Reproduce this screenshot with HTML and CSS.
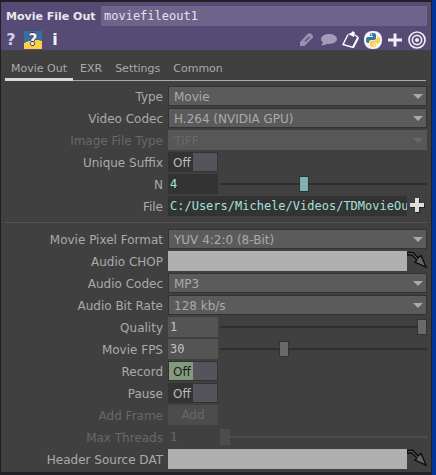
FILE: index.html
```html
<!DOCTYPE html>
<html lang="en">
<head>
<meta charset="utf-8">
<title>Movie File Out</title>
<link rel="stylesheet" href="styles.css">
</head>
<body>
<main class="panel">
  <header class="header">
    <div class="title-row">
      <label class="op-type" for="opname">Movie File Out</label>
      <input class="op-name" id="opname" value="moviefileout1" spellcheck="false">
    </div>
    <div class="toolbar">
      <button class="tool help">?</button>
      <button class="tool pyhelp">?</button>
      <button class="tool info">i</button>
      <span class="spacer"></span>
      <button class="tool icon" aria-label="Edit"><svg width="20" height="18" viewBox="0 0 20 18"><path d="M3 15V11L11 2.500H14L16 5V6.500L7.500 15Z" fill="#9790ae"/><path d="M8 10.500L12.500 6" stroke="#554b75" stroke-width="1.200"/></svg></button>
      <button class="tool icon" aria-label="Comment"><svg width="20" height="18" viewBox="0 0 20 18"><ellipse cx="10" cy="8" rx="8" ry="5" fill="#a39bb9"/><path d="M4 10Q4 13 2 14Q6 15 9 12Z" fill="#a39bb9"/></svg></button>
      <button class="tool icon" aria-label="Clipboard"><svg width="20" height="18" viewBox="0 0 20 18"><path d="M7 3.500L2 13.500L12 16.500L17 6.500L14 4" fill="none" stroke="#fff" stroke-width="1.400"/><path d="M12 16.500L17 7" stroke="#fff" stroke-width="2"/><path d="M7 3L10 2L12 0L14 2L13 6Z" fill="#fff"/></svg></button>
      <button class="tool icon" aria-label="Python"><svg width="20" height="18" viewBox="0 0 20 18"><rect x="1" y="0" width="18" height="18" rx="8" fill="#f2f2f5"/><path d="M7 5V3.500Q7 2 10 2Q13 2 13 4V7Q13 9 11 9H8Q6 9 6 12H5Q3 12 3 9Q3 6 5 6H10V5Z" fill="#3477a5"/><path d="M13 13V14.500Q13 16 10 16Q7 16 7 14V11Q7 9.500 9 9.500H12Q14 9 14 6H15Q17 6 17 9Q17 12.500 15 12.500H10V13Z" fill="#ffd04a"/><circle cx="8.500" cy="3.700" r=".7" fill="#fff"/><circle cx="11.500" cy="14.400" r=".7" fill="#fff"/></svg></button>
      <button class="tool icon" aria-label="Add"><svg width="20" height="18" viewBox="0 0 20 18"><path d="M10 2.500V15.500M3 9H17" stroke="#f0eff4" stroke-width="3"/></svg></button>
      <button class="tool icon" aria-label="Target"><svg width="20" height="18" viewBox="0 0 20 18"><g fill="none" stroke="#efedf4" stroke-width="1.700"><circle cx="10" cy="9" r="8"/><circle cx="10" cy="9" r="4.600"/></g><circle cx="10" cy="9" r="2" fill="#efedf4"/></svg></button>
    </div>
  </header>

  <nav class="tabs">
    <a class="tab active" href="#">Movie Out</a>
    <a class="tab" href="#">EXR</a>
    <a class="tab" href="#">Settings</a>
    <a class="tab" href="#">Common</a>
  </nav>

  <form class="params">
    <div class="row"><label for="type">Type</label><div class="menu"><select id="type"><option>Movie</option></select></div></div>
    <div class="row"><label for="vcodec">Video Codec</label><div class="menu"><select id="vcodec"><option>H.264 (NVIDIA GPU)</option></select></div></div>
    <div class="row off"><label for="imgtype">Image File Type</label><div class="menu"><select id="imgtype" disabled><option>TIFF</option></select></div></div>
    <div class="row"><label for="unique">Unique Suffix</label><label class="toggle"><span>Off</span><input type="checkbox" id="unique"></label></div>
    <div class="row changed"><label for="n">N</label><div class="number"><input class="value" id="n" value="4"><input type="range" aria-label="N slider" min="0" max="10" value="4"></div></div>
    <div class="row changed"><label for="file">File</label><div class="path"><input class="value" id="file" value="C:/Users/Michele/Videos/TDMovieOu" spellcheck="false"><button type="button" class="end" aria-label="Browse"><svg width="20" height="20" viewBox="0 0 20 20"><path d="M11 3V17M4 10H18" stroke="#222" stroke-width="4"/><path d="M10 2V16M3 9H17" stroke="#ddd" stroke-width="4"/></svg></button></div></div>
    <hr>
    <div class="row"><label for="pixfmt">Movie Pixel Format</label><div class="menu"><select id="pixfmt"><option>YUV 4:2:0 (8-Bit)</option></select></div></div>
    <div class="row"><label for="chop">Audio CHOP</label><div class="path"><input class="reference" id="chop"><button type="button" class="end" aria-label="Pick CHOP"><svg width="20" height="20" viewBox="0 0 20 20"><path d="M0 1.500H6L11 7L14 4.500L19 16L8 11L10 9L5 4H0Z" fill="#666" stroke="#0b0b0b" stroke-width="1.300"/></svg></button></div></div>
    <div class="row"><label for="acodec">Audio Codec</label><div class="menu"><select id="acodec"><option>MP3</option></select></div></div>
    <div class="row"><label for="bitrate">Audio Bit Rate</label><div class="menu"><select id="bitrate"><option>128 kb/s</option></select></div></div>
    <div class="row"><label for="quality">Quality</label><div class="number"><input class="value" id="quality" value="1"><input type="range" aria-label="Quality slider" min="0" max="1" value="1"></div></div>
    <div class="row"><label for="fps">Movie FPS</label><div class="number"><input class="value" id="fps" value="30"><input type="range" aria-label="Movie FPS slider" min="0" max="100" value="30"></div></div>
    <div class="row"><label for="record">Record</label><label class="toggle green"><span>Off</span><input type="checkbox" id="record"></label></div>
    <div class="row"><label for="pause">Pause</label><label class="toggle"><span>Off</span><input type="checkbox" id="pause"></label></div>
    <div class="row off"><label for="add">Add Frame</label><button type="button" class="pulse" id="add" disabled>Add</button></div>
    <div class="row off"><label for="threads">Max Threads</label><div class="number"><input class="value" id="threads" value="1" disabled><input type="range" aria-label="Max Threads slider" min="1" max="32" value="1" disabled></div></div>
    <div class="row"><label for="dat">Header Source DAT</label><div class="path"><input class="reference" id="dat"><button type="button" class="end" aria-label="Pick DAT"><svg width="20" height="20" viewBox="0 0 20 20"><path d="M0 1.500H6L11 7L14 4.500L19 16L8 11L10 9L5 4H0Z" fill="#666" stroke="#0b0b0b" stroke-width="1.300"/></svg></button></div></div>
  </form>
</main>
</body>
</html>
```
FILE: styles.css
```css
* { box-sizing: border-box; }

body {
  margin: 0;
  padding: 2px 5px 3px 1px;
  min-height: 100vh;
  background: linear-gradient(to left, #02359c 4px, #202027 4px);
  font: 12px/20px "DejaVu Sans", Verdana, sans-serif;
  color: #aaa;
}

input, select, button {
  margin: 0;
  padding: 0;
  border: 0;
  border-radius: 0;
  background: none;
  font: inherit;
  color: inherit;
  appearance: none;
}

svg { display: block; }

.panel { background: #404040; }

.header {
  height: 48px;
  padding: 4px 4px 0 5px;
  background: #554b75;
}

.title-row { display: flex; }

.op-type {
  width: 95px;
  font-weight: bold;
  font-size: 11px;
  line-height: 22px;
  color: #e9e7ee;
  white-space: nowrap;
}

.op-name {
  flex: 1;
  min-width: 0;
  height: 20px;
  padding-left: 3px;
  background: #6e638b;
  font-family: "DejaVu Sans Mono", monospace;
  color: #e4e1eb;
}

.toolbar {
  display: flex;
  align-items: center;
  height: 24px;
}

.spacer { flex: 1; }

.tool {
  width: 18px;
  height: 18px;
  font-size: 16px;
  line-height: 18px;
  font-weight: bold;
  color: #f2f1f6;
}

.help { width: 10px; margin-right: 8px; color: #d2cede; }

.pyhelp {
  background: radial-gradient(ellipse 16px 9px at 12px 18px, #ffd140 95%, #3471a3 100%);
  text-shadow: 1px 0 #403758, -1px 0 #403758, 0 1px #403758, 0 -1px #403758;
}

.info { width: 10px; margin-left: 8px; }

.icon { width: 20px; margin-left: 2px; }

.tabs {
  display: flex;
  gap: 1px;
  height: 31px;
  margin: 0 5px 5px 4px;
  padding-top: 8px;
  background: linear-gradient(#aaa, #aaa) 0 100% / 100% 1px no-repeat;
  font-size: 11px;
}

.tab {
  padding: 0 6px;
  line-height: 22px;
  color: #aaa;
  text-decoration: none;
}

.tab.active { border-bottom: 3px solid #d8dbd8; }

.params {
  display: flex;
  flex-direction: column;
  gap: 2px;
  padding: 0 4px 3px;
}

.row {
  display: grid;
  grid-template-columns: 163px 1fr;
  height: 20px;
}

.row > label:first-child {
  padding-right: 5px;
  line-height: 22px;
  text-align: right;
}

.off { color: #686868; }

hr {
  width: 100%;
  height: 1px;
  margin: 4px 0;
  border: 0;
  background: #555;
}

.menu {
  position: relative;
  height: 20px;
  border: 1px solid #333;
  background: #5b5b5b;
}

.menu select {
  width: 100%;
  height: 18px;
  padding-left: 5px;
  line-height: 20px;
  opacity: 1;
}

.menu::after {
  content: "";
  position: absolute;
  top: 7px;
  right: 3px;
  border: 5px solid transparent;
  border-top-color: #aaa;
  border-bottom: 0;
  pointer-events: none;
}

.off .menu { border-color: #575757; background: #575757; color: #6a6a6a; }
.off .menu::after { border-top-color: #6a6a6a; }

.toggle {
  display: flex;
  width: 50px;
  height: 20px;
  border: 1px solid #333;
  background: #333;
}

.toggle span {
  width: 24px;
  padding-left: 4px;
  color: #bbb;
}

.toggle input { width: 24px; height: 18px; background: #55545d; }

.toggle.green span { background: #849a7d; color: #1c1c1c; }

.number {
  display: grid;
  grid-template-columns: 50px 1fr;
  gap: 2px;
}

.value {
  width: 100%;
  height: 20px;
  padding-left: 2px;
  background: #545454;
  font-family: "DejaVu Sans Mono", monospace;
  color: #c2c2c2;
}

.changed .value { background: #333; color: #a5e0dc; }
.off .value { background: none; color: #686868; }

input[type="range"] {
  width: 100%;
  height: 20px;
  background: linear-gradient(#2e2e2e, #2e2e2e) 0 50% / 100% 2px no-repeat;
}

input[type="range"]::-webkit-slider-thumb {
  appearance: none;
  width: 10px;
  height: 16px;
  border: 1px solid #333;
  background: #6a6a6a;
}

.changed input[type="range"]::-webkit-slider-thumb { background: #7fb0b0; }

.off input[type="range"] { background-image: linear-gradient(#4d4d4d, #4d4d4d); }

.off input[type="range"]::-webkit-slider-thumb {
  border-color: #4d4d4d;
  background: #4d4d4d;
}

.path {
  display: grid;
  grid-template-columns: 1fr 20px;
}

.reference {
  width: 100%;
  height: 20px;
  background: #b0b0b0;
  color: #111;
}

.end { width: 20px; height: 20px; }

.pulse {
  width: 50px;
  height: 20px;
  background: #4c4c4c;
}
```
